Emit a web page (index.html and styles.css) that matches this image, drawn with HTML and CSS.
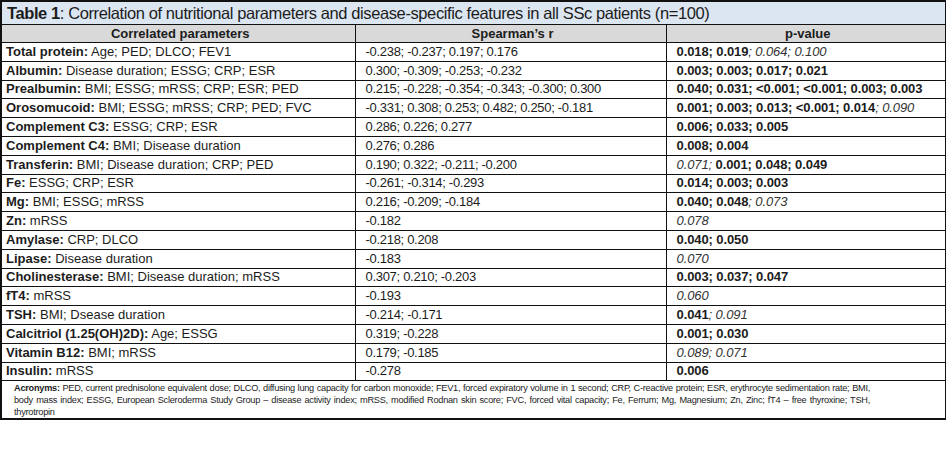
FILE: index.html
```html
<!DOCTYPE html>
<html>
<head>
<meta charset="utf-8">
<link rel="stylesheet" href="styles.css">
</head>
<body>
<table class="tbl">
  <colgroup><col class="c1"><col class="c2"><col class="c3"></colgroup>
  <tr class="title"><td colspan="3"><b>Table 1</b>: Correlation of nutritional parameters and disease-specific features in all SSc patients (n=100)</td></tr>
  <tr class="head"><th>Correlated parameters</th><th>Spearman’s r</th><th>p-value</th></tr>
  <tr><td class="p"><b>Total protein:</b> Age; PED; DLCO; FEV1</td><td class="r">-0.238; -0.237; 0.197; 0.176</td><td class="v"><b>0.018; 0.019</b><i>; 0.064; 0.100</i></td></tr>
  <tr><td class="p"><b>Albumin:</b> Disease duration; ESSG; CRP; ESR</td><td class="r">0.300; -0.309; -0.253; -0.232</td><td class="v"><b>0.003; 0.003; 0.017; 0.021</b></td></tr>
  <tr><td class="p"><b>Prealbumin:</b> BMI; ESSG; mRSS; CRP; ESR; PED</td><td class="r">0.215; -0.228; -0.354; -0.343; -0.300; 0.300</td><td class="v"><b>0.040; 0.031; &lt;0.001; &lt;0.001; 0.003; 0.003</b></td></tr>
  <tr><td class="p"><b>Orosomucoid:</b> BMI; ESSG; mRSS; CRP; PED; FVC</td><td class="r">-0.331; 0.308; 0.253; 0.482; 0.250; -0.181</td><td class="v"><b>0.001; 0.003; 0.013; &lt;0.001; 0.014</b><i>; 0.090</i></td></tr>
  <tr><td class="p"><b>Complement C3:</b> ESSG; CRP; ESR</td><td class="r">0.286; 0.226; 0.277</td><td class="v"><b>0.006; 0.033; 0.005</b></td></tr>
  <tr><td class="p"><b>Complement C4:</b> BMI; Disease duration</td><td class="r">0.276; 0.286</td><td class="v"><b>0.008; 0.004</b></td></tr>
  <tr><td class="p"><b>Transferin:</b> BMI; Disease duration; CRP; PED</td><td class="r">0.190; 0.322; -0.211; -0.200</td><td class="v"><i>0.071;</i> <b>0.001; 0.048; 0.049</b></td></tr>
  <tr><td class="p"><b>Fe:</b> ESSG; CRP; ESR</td><td class="r">-0.261; -0.314; -0.293</td><td class="v"><b>0.014; 0.003; 0.003</b></td></tr>
  <tr><td class="p"><b>Mg:</b> BMI; ESSG; mRSS</td><td class="r">0.216; -0.209; -0.184</td><td class="v"><b>0.040; 0.048</b><i>; 0.073</i></td></tr>
  <tr><td class="p"><b>Zn:</b> mRSS</td><td class="r">-0.182</td><td class="v"><i>0.078</i></td></tr>
  <tr><td class="p"><b>Amylase:</b> CRP; DLCO</td><td class="r">-0.218; 0.208</td><td class="v"><b>0.040; 0.050</b></td></tr>
  <tr><td class="p"><b>Lipase:</b> Disease duration</td><td class="r">-0.183</td><td class="v"><i>0.070</i></td></tr>
  <tr><td class="p"><b>Cholinesterase:</b> BMI; Disease duration; mRSS</td><td class="r">0.307; 0.210; -0.203</td><td class="v"><b>0.003; 0.037; 0.047</b></td></tr>
  <tr><td class="p"><b>fT4:</b> mRSS</td><td class="r">-0.193</td><td class="v"><i>0.060</i></td></tr>
  <tr><td class="p"><b>TSH:</b> BMI; Dsease duration</td><td class="r">-0.214; -0.171</td><td class="v"><b>0.041</b><i>; 0.091</i></td></tr>
  <tr><td class="p"><b>Calcitriol (1.25(OH)2D):</b> Age; ESSG</td><td class="r">0.319; -0.228</td><td class="v"><b>0.001; 0.030</b></td></tr>
  <tr><td class="p"><b>Vitamin B12:</b> BMI; mRSS</td><td class="r">0.179; -0.185</td><td class="v"><i>0.089; 0.071</i></td></tr>
  <tr><td class="p"><b>Insulin:</b> mRSS</td><td class="r">-0.278</td><td class="v"><b>0.006</b></td></tr>
  <tr class="foot"><td colspan="3"><span class="ln j"><b>Acronyms:</b> PED, current prednisolone equivalent dose; DLCO, diffusing lung capacity for carbon monoxide; FEV1, forced expiratory volume in 1 second; CRP, C-reactive protein; ESR, erythrocyte sedimentation rate; BMI,</span><span class="ln j">body mass index; ESSG, European Scleroderma Study Group – disease activity index; mRSS, modified Rodnan skin score; FVC, forced vital capacity; Fe, Ferrum; Mg, Magnesium; Zn, Zinc; fT4 – free thyroxine; TSH,</span><span class="ln">thyrotropin</span></td></tr>
</table>
</body>
</html>
```
FILE: styles.css
```css
html, body {
  margin: 0;
  padding: 0;
  background: #ffffff;
}
body {
  font-family: "Liberation Sans", Arial, sans-serif;
  color: #1c1c1c;
}
.tbl {
  border-collapse: collapse;
  table-layout: fixed;
  width: 945px;
  border: 2px solid #111;
}
.c1 { width: 354px; }
.c2 { width: 311px; }
.c3 { width: 280px; }
.tbl td, .tbl th {
  border: 1px solid #111;
  padding: 0 0 0 4px;
  height: 17.8px;
  font-size: 13px;
  line-height: 16px;
  white-space: nowrap;
  overflow: hidden;
  text-align: left;
  font-weight: normal;
}
.tbl b { font-weight: bold; }
.tbl i { font-style: italic; color: #333; }
.tbl td.r, .tbl td.v { padding-left: 10px; }
.tbl td.r { letter-spacing: -0.3px; }
.tbl td.v { letter-spacing: -0.1px; }
.title td {
  background: #dce6f1;
  font-size: 16.5px;
  letter-spacing: -0.4px;
  height: 22px;
  line-height: 22px;
  padding-left: 5px;
}
.head th {
  background: #d9d9d9;
  font-weight: bold;
  text-align: center;
  height: 17px;
  font-size: 13px;
}
.foot td {
  font-size: 9.2px;
  letter-spacing: -0.25px;
  line-height: 12px;
  height: auto;
  padding: 1px 75px 0 12px;
  vertical-align: top;
}
.ln {
  display: block;
  white-space: nowrap;
}
.ln.j {
  white-space: normal;
  text-align: justify;
  text-align-last: justify;
}
```
